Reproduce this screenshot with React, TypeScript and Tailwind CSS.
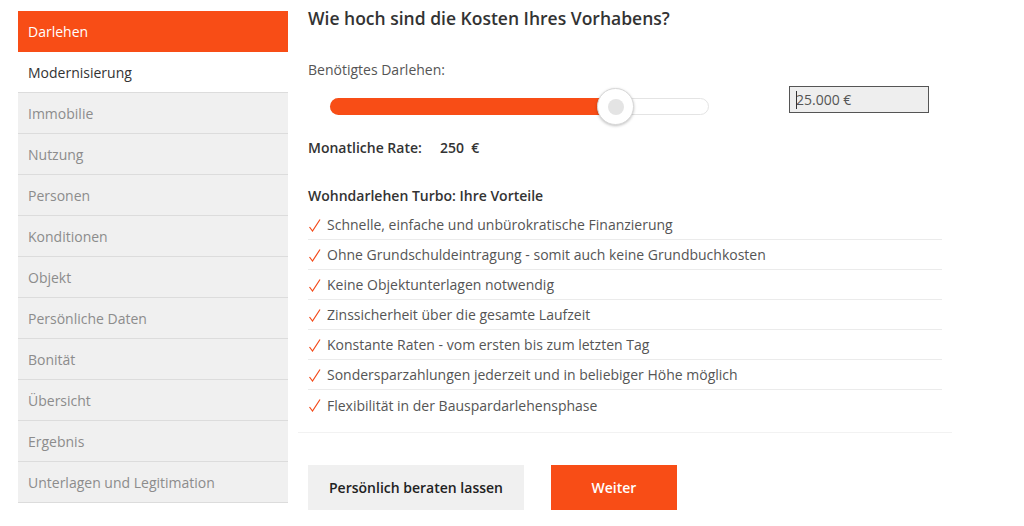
import React from "react";

const items = [
  "Darlehen",
  "Modernisierung",
  "Immobilie",
  "Nutzung",
  "Personen",
  "Konditionen",
  "Objekt",
  "Persönliche Daten",
  "Bonität",
  "Übersicht",
  "Ergebnis",
  "Unterlagen und Legitimation",
];

const vorteile = [
  "Schnelle, einfache und unbürokratische Finanzierung",
  "Ohne Grundschuldeintragung - somit auch keine Grundbuchkosten",
  "Keine Objektunterlagen notwendig",
  "Zinssicherheit über die gesamte Laufzeit",
  "Konstante Raten - vom ersten bis zum letzten Tag",
  "Sondersparzahlungen jederzeit und in beliebiger Höhe möglich",
  "Flexibilität in der Bauspardarlehensphase",
];

function Check() {
  return (
    <svg width="13" height="14" viewBox="0 0 13 14" className="shrink-0">
      <path d="M1.5 9 L4.5 13 L12 1.5" fill="none" stroke="#f44a1a" strokeWidth="1.2" />
    </svg>
  );
}

export default function App() {
  return (
    <div
      className="w-[1024px] h-[526px] bg-white flex text-[#333]"
      style={{ fontFamily: '"Open Sans", "Noto Sans", sans-serif' }}
    >
      <div className="w-[270px] ml-[18px] mt-[11px] flex flex-col self-start">
        {items.map((it, i) => (
          <div
            key={it}
            className={
              "h-[41px] flex items-center pl-[10px] text-[14px] " +
              (i === 0
                ? "bg-[#f84d16] text-white"
                : i === 1
                ? "bg-white text-[#333] border-b border-[#dcdcdc]"
                : "bg-[#f0f0f0] text-[#8c8c8c] border-b border-[#dcdcdc]")
            }
          >
            {it}
          </div>
        ))}
      </div>

      <div className="ml-[10px] w-[654px] flex flex-col">
        <div className="pl-[10px] pt-[6px] text-[17.5px] font-semibold text-[#333] leading-[24px]">
          Wie hoch sind die Kosten Ihres Vorhabens?
        </div>
        <div className="pl-[10px] mt-[30px] text-[14px] text-[#555] leading-[20px]">
          Benötigtes Darlehen:
        </div>
        <div className="flex items-start h-[38px] mt-[6px]">
          <div className="ml-[32px] mt-[12px] w-[379px] h-[17px] rounded-full bg-white border border-[#e4e4e4] relative">
            <div className="absolute left-[-1px] top-[-1px] h-[17px] w-[290px] rounded-full bg-[#f84d16]" />
            <div className="absolute left-[266px] top-[-11px] w-[37px] h-[37px] rounded-full bg-white border border-[#d8d8d8] shadow-[0_1px_3px_rgba(0,0,0,0.25)] flex items-center justify-center">
              <div className="w-[16px] h-[16px] rounded-full bg-[#e4e4e4]" />
            </div>
          </div>
          <div className="ml-[80px] w-[140px] h-[27px] border border-[#555] bg-[#eeeeee] flex items-center pl-[6px] text-[14px] text-[#555] relative">
            <span className="absolute left-[6px] top-[4px] w-px h-[18px] bg-[#333]" />
            25.000 €
          </div>
        </div>
        <div className="pl-[10px] mt-[14px] flex text-[14px] font-semibold text-[#333] leading-[20px]">
          <span className="w-[132px]">Monatliche Rate:</span>
          <span>250&nbsp; €</span>
        </div>
        <div className="pl-[10px] mt-[28px] text-[14px] font-semibold text-[#333] leading-[20px]">
          Wohndarlehen Turbo: Ihre Vorteile
        </div>
        <div className="ml-[10px] w-[634px] flex flex-col mt-[4px]">
          {vorteile.map((v, i) => (
            <div
              key={v}
              className={
                "h-[30px] flex items-center gap-[6px] text-[14px] text-[#555] " +
                (i < vorteile.length - 1 ? "border-b border-[#ebebeb]" : "")
              }
            >
              <Check />
              <span>{v}</span>
            </div>
          ))}
        </div>
        <div className="mt-[12px] w-[654px] h-px bg-[#f2f2f2]" />
        <div className="pl-[10px] mt-[32px] flex gap-[27px]">
          <button className="w-[216px] h-[45px] bg-[#f0f0f0] text-[14px] font-semibold text-[#222]">
            Persönlich beraten lassen
          </button>
          <button className="w-[126px] h-[45px] bg-[#f84d16] text-[14px] font-semibold text-white">
            Weiter
          </button>
        </div>
      </div>
    </div>
  );
}
